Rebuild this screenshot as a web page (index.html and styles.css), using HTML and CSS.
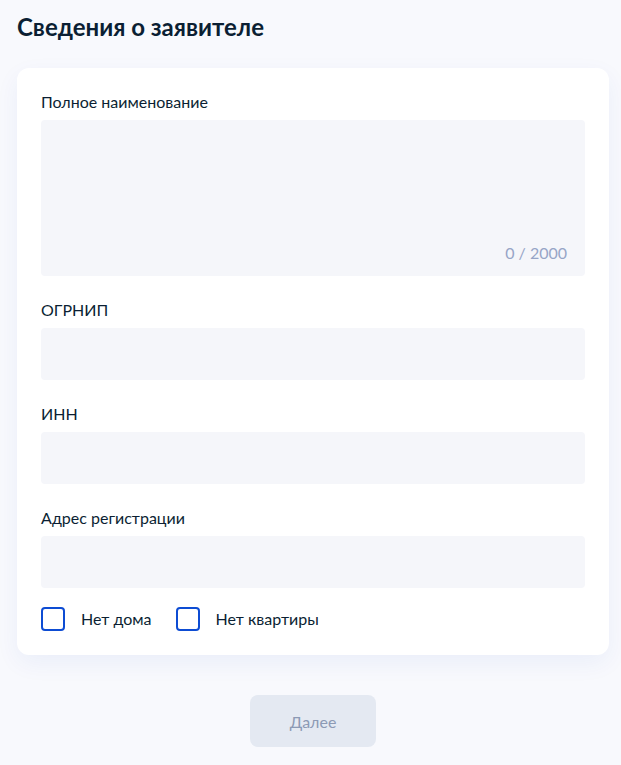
FILE: index.html
```html
<!DOCTYPE html>
<html lang="ru">
<head>
<meta charset="utf-8">
<title>Сведения о заявителе</title>
<link rel="stylesheet" href="styles.css">
</head>
<body>
<div class="page">
  <h1 class="title">Сведения о заявителе</h1>
  <div class="card">
    <div class="field">
      <label class="label">Полное наименование</label>
      <div class="textarea"><span class="counter">0 / 2000</span></div>
    </div>
    <div class="field">
      <label class="label">ОГРНИП</label>
      <div class="input"></div>
    </div>
    <div class="field">
      <label class="label">ИНН</label>
      <div class="input"></div>
    </div>
    <div class="field">
      <label class="label">Адрес регистрации</label>
      <div class="input"></div>
    </div>
    <div class="checks">
      <label class="check"><span class="box"></span><span>Нет дома</span></label>
      <label class="check"><span class="box"></span><span>Нет квартиры</span></label>
    </div>
  </div>
  <div class="actions">
    <button class="btn" disabled>Далее</button>
  </div>
</div>
</body>
</html>
```
FILE: styles.css
```css
* { box-sizing: border-box; }
html, body { margin: 0; padding: 0; }
body {
  background: #f8f9fd;
  font-family: Lato, "Noto Sans", sans-serif;
  color: #0b1f33;
  width: 621px;
  height: 765px;
  overflow: hidden;
}
.page {
  padding: 13px 12px 0 17px;
}
.title {
  margin: 0;
  font-size: 24px;
  font-weight: 700;
  line-height: 28px;
  color: #0b1f33;
}
.card {
  margin-top: 27px;
  background: #fff;
  border-radius: 12px;
  padding: 24px 24px 24px 24px;
  box-shadow: 0 8px 24px rgba(0, 60, 180, 0.06);
  display: flex;
  flex-direction: column;
  gap: 24px;
}
.field {
  display: flex;
  flex-direction: column;
  gap: 8px;
}
.label {
  font-size: 16px;
  line-height: 20px;
  color: #0b1f33;
}
.textarea {
  height: 156px;
  background: #f5f6fa;
  border-radius: 4px;
  display: flex;
  align-items: flex-end;
  justify-content: flex-end;
  padding: 0 18px 13px 0;
}
.counter {
  font-size: 16px;
  line-height: 20px;
  color: #97a5c7;
}
.input {
  height: 52px;
  background: #f5f6fa;
  border-radius: 4px;
}
.checks {
  display: flex;
  gap: 24px;
  margin-top: -5px;
}
.check {
  display: flex;
  align-items: center;
  gap: 16px;
  font-size: 16px;
  line-height: 24px;
}
.box {
  width: 24px;
  height: 24px;
  border: 2px solid #0d4cd3;
  border-radius: 4px;
  background: #fff;
}
.actions {
  display: flex;
  justify-content: center;
  padding-top: 40px;
}
.btn {
  width: 126px;
  height: 52px;
  border: none;
  border-radius: 8px;
  background: #e4e9f2;
  color: #8c9ab5;
  font-family: Lato, "Noto Sans", sans-serif;
  font-size: 16px;
}
```
